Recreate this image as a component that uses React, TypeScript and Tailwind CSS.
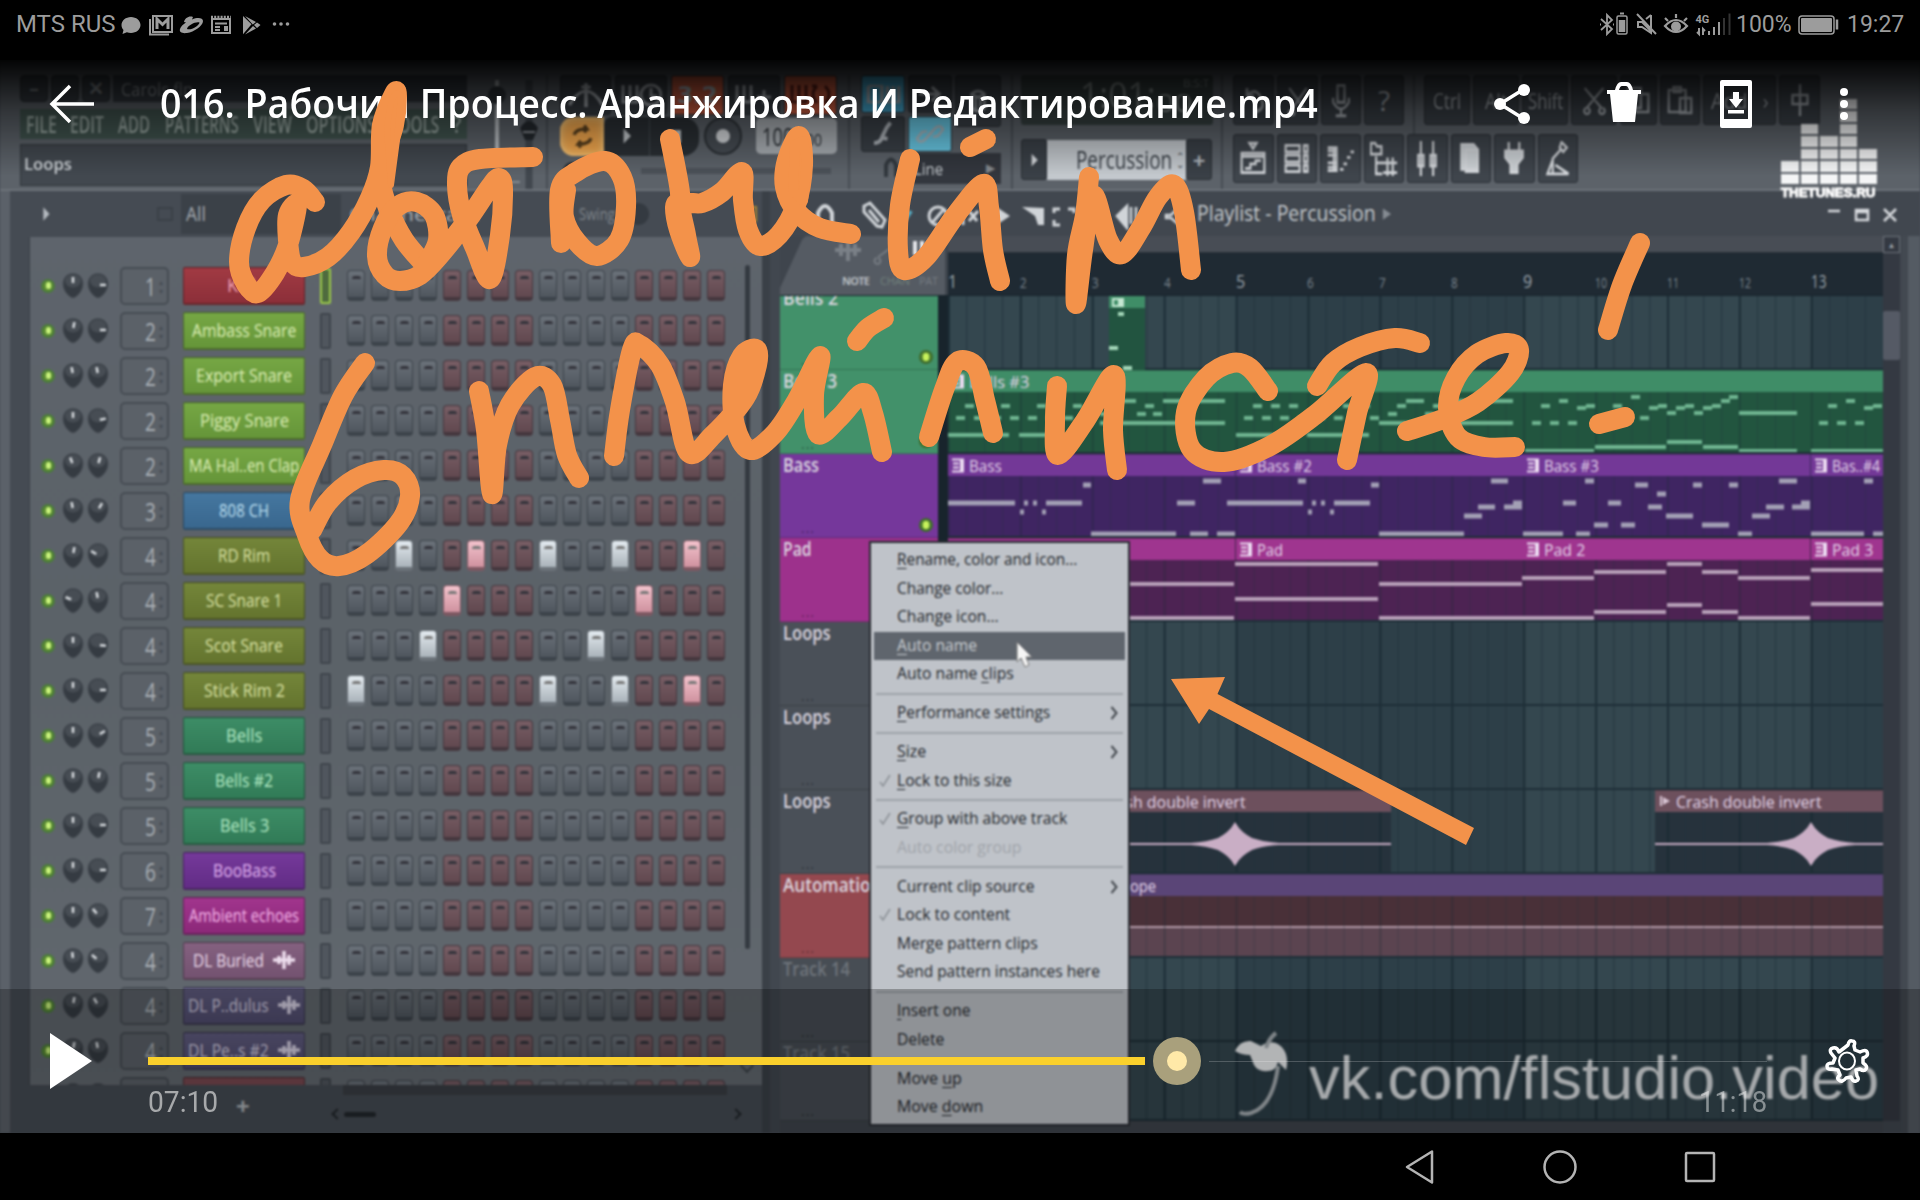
import React, { useLayoutEffect, useRef } from "react";

/* Text squeezed or stretched to a given width. */
function Fit({ w, className = "", children }: { w: number; className?: string; children: React.ReactNode }) {
  const ref = useRef<HTMLSpanElement>(null);
  useLayoutEffect(() => {
    const el = ref.current;
    if (el && el.offsetWidth) el.style.transform = `scaleX(${w / el.offsetWidth})`;
  }, [w]);
  return (
    <span className={"block shrink-0 leading-none " + className} style={{ width: w }}>
      <span ref={ref} className="inline-block origin-left whitespace-pre">
        {children}
      </span>
    </span>
  );
}

/* ---------- status bar ---------- */
function StatusBar() {
  return (
    <header className="flex h-[60px] items-start justify-between bg-black pl-4 pr-4 pt-[12px] font-['Roboto'] text-[23px] text-[#9c9c9c]">
      <div className="flex h-[25px] items-center">
        <Fit w={99}>MTS RUS</Fit>
        <svg className="ml-[6px]" width="176" height="26" viewBox="121 12 176 26" fill="#9c9c9c">
          <path d="M131 17c5.200 0 9.500 3.600 9.500 8s-4.300 8-9.500 8c-1.500 0-2.900-.3-4.100-.8L122.500 34l1-4c-1.200-1.300-2-3.100-2-5 0-4.400 4.300-8 9.500-8z" />
          <g fill="none" stroke="#9c9c9c" strokeWidth="2">
            <rect x="153" y="16" width="19" height="16" />
            <path d="M150 19v15.500h19" />
            <path d="M157 29v-10l5.500 5.500L168 19v10" strokeWidth="3" />
          </g>
          <path d="M184 22c1-4 5-6.500 9-5l-1 2.500c6-2.500 11-1.500 11 1.500 0 5-9 11-16 12-5 .7-8-1-7-4 .8-2.500 3-4.500 6-6.500zm3 7c4 1.500 12-3 12.500-6.500-3-1.500-12 2.500-12.500 6.500z" fillRule="evenodd" />
          <g fill="none" stroke="#9c9c9c" strokeWidth="2">
            <rect x="212" y="19" width="18" height="14" />
            <path d="M211 17h20" strokeWidth="2.500" strokeDasharray="2 1.200" />
            <path d="M215 23.500h12M215 27h5M215 30h5" />
            <path d="M224 28.500h4" strokeWidth="5" />
          </g>
          <path d="M243 16l8.500 8.200-8.500 10zM245 16l11 6-3.200 2.500zM245 34.500l8-8.500 3 2.500zM257 22.500l3.500 2.500-3.500 3-3-2.900z" />
          <circle cx="274.500" cy="24" r="1.800" />
          <circle cx="281" cy="24" r="1.800" />
          <circle cx="287.500" cy="24" r="1.800" />
        </svg>
      </div>
      <div className="flex h-[25px] items-center">
        <svg width="134" height="28" viewBox="1599 11 134 28" fill="none" stroke="#9c9c9c" strokeWidth="2">
          <path d="M1601 19l11 10-5 5V15l5 5-11 10M1600 24.500h1M1613 24.500h1" strokeWidth="1.800" />
          <rect x="1617" y="16" width="10" height="18" rx="1.500" strokeWidth="1.500" />
          <path d="M1620 13.500h4" />
          <path d="M1622 20v12" strokeWidth="6.500" />
          <path d="M1637 14l19 20M1651 15v13M1651 15l-5 4M1638 22h4l9 9v2l-9-6h-4z" />
          <path d="M1665 26q11-12 22 0q-11 12-22 0zM1668 21l-3-3M1676 18v-4M1684 21l3-3" strokeWidth="2.200" />
          <circle cx="1676" cy="26.500" r="4" fill="#9c9c9c" />
          <text x="1695.500" y="22.500" fontFamily="Roboto" fontWeight="700" fontSize="11" fill="#9c9c9c" stroke="none">4G</text>
          <path d="M1699 28v6l-2-2M1703 35v-6l2 2M1709 31v4M1714 27v8M1719 22v13" />
          <path d="M1724 18v17M1729.500 13.500V35" stroke="#333" />
        </svg>
        <Fit w={56} className="ml-[3px]">100%</Fit>
        <svg className="ml-[6px]" width="42" height="20" viewBox="0 0 42 20">
          <rect x="1" y="1" width="35" height="18" rx="3" fill="none" stroke="#9c9c9c" strokeWidth="1.500" />
          <rect x="3" y="3" width="31" height="14" rx="1" fill="#9c9c9c" />
          <path d="M39 4.500v10" stroke="#9c9c9c" strokeWidth="2.500" />
        </svg>
        <Fit w={57} className="ml-[7px]">19:27</Fit>
      </div>
    </header>
  );
}

/* ---------- toolbar ---------- */
function Btn({ w, h, className = "", children }: { w: number; h: number; className?: string; children?: React.ReactNode }) {
  return (
    <div
      className={"flex shrink-0 items-center justify-center rounded-[3px] border border-[#2a2f35] text-[#aeb4ba] " + (className || "bg-[#3a4047]")}
      style={{ width: w, height: h }}
    >
      {children}
    </div>
  );
}

function Ico({ d, w = 32, h = 32, sw = 3, fill = "none", c = "currentColor" }: { d: string; w?: number; h?: number; sw?: number; fill?: string; c?: string }) {
  return (
    <svg width={w} height={h} viewBox="0 0 32 32" fill={fill} stroke={c} strokeWidth={sw} preserveAspectRatio="none">
      <path d={d} />
    </svg>
  );
}

const SHORTCUTS: { w: number; label?: string; lw?: number; d?: string }[] = [
  { w: 46, label: "Ctrl", lw: 28 },
  { w: 46, label: "Alt", lw: 22 },
  { w: 46, label: "Shift", lw: 35 },
  { w: 46, d: "M6 4l18 20M26 4L8 24M8 24a3 3 0 1 0 1 0M24 24a3 3 0 1 0 1 0" },
  { w: 37, d: "M4 4h14v20H4zM12 10h14v18H12z" },
  { w: 40, d: "M4 6h18v22H4zM9 3h8v5H9zM16 14h12v15H16z" },
  { w: 73, label: "Add   ›", lw: 58 },
  { w: 41, d: "M16 0v32M8 11h16v9H8z" },
];

const WINDOW_ICONS: { d: string; fill?: string }[] = [
  { d: "M3 11h26v18H3zM3 14h26M7 25h6v-4h6v-3h6M16 7l4-5h-8z" },
  { d: "M3 4h16v6H3zM3 13h16v6H3zM3 22h16v6H3zM24 4h4v6h-4zM24 13h4v6h-4zM24 22h4v6h-4z" },
  { d: "M2 6h10v21H2M2 9h10M2 13h10M2 20h10M2 24h10M9 6v21M16 26h4M20 21h4M24 15h4M28 10h4" },
  { d: "M1 2h5l2 3h5v7H1zM7 14v16h7M7 20h12M15 20h16M15 29h16M20 15v10M26 15v10M20 25v7M26 25v7" },
  { d: "M9 0v32M23 0v32M6 13h6v10H6zM20 13h6v10h-6z" },
  { d: "M5 3h14l5 5v18H5zM10 8h14v20H10z", fill: "#cdd2d6" },
  { d: "M10 1v7M22 1v7M6 9h20v6l-6 6v8h-8v-8l-6-6z", fill: "#cdd2d6" },
  { d: "M20 1l6 5-4 4-4-4zM19 8l-9 8v13M10 17L4 30h24l-15-8", fill: "none" },
];

function Toolbar() {
  return (
    <div className="flex h-[131px] shrink-0 border-b-2 border-[#6c7279] bg-[#5c6269] pl-[20px] pt-[15px] font-['Open_Sans']">
      <div className="flex w-[447px] flex-col">
        <div className="flex h-[31px] gap-[3px]">
          {["–", "▫", "✕"].map((g) => (
            <div key={g} className="flex h-[27px] w-[28px] items-center justify-center rounded-sm border border-[#262b30] bg-[#343a40] text-[19px] font-bold text-[#858b90]">
              {g}
            </div>
          ))}
          <div className="flex h-[27px] flex-1 items-center bg-[#333940] pl-[8px] text-[18px] font-medium text-[#8e9499]">
            <Fit w={72}>Carols.flp</Fit>
          </div>
        </div>
        <div className="mt-[3px] flex h-[30px] items-center bg-[#41544f] pl-[6px] text-[23px] font-semibold text-[#9caaa5]">
          <Fit w={31}>FILE</Fit>
          <Fit w={34} className="ml-[13px]">EDIT</Fit>
          <Fit w={32} className="ml-[14px]">ADD</Fit>
          <Fit w={74} className="ml-[15px]">PATTERNS</Fit>
          <Fit w={39} className="ml-[14px]">VIEW</Fit>
          <Fit w={70} className="ml-[14px]">OPTIONS</Fit>
          <Fit w={49} className="ml-[14px]">TOOLS</Fit>
          <Fit w={8} className="ml-[14px]">?</Fit>
        </div>
        <div className="mt-[5px] flex h-[42px] items-center border border-[#30363c] bg-[#42484f] pb-[4px] pl-[3px] text-[17px] font-semibold text-[#d0d5d9]">
          <Fit w={48}>Loops</Fit>
        </div>
      </div>
      <svg className="shrink-0" width="90" height="114" viewBox="467 75 90 114">
        <path d="M497 80v80" stroke="#b9bec2" strokeWidth="4" />
        <path d="M529 80v110" stroke="#41474e" strokeWidth="7" />
        <path d="M520 128q9-14 18 0l-5 12h-8z" fill="#24292e" />
        <path d="M523 132h12M485 182h35" stroke="#858b90" strokeWidth="2" />
        <path d="M547 66v124" stroke="#484e55" strokeWidth="2" />
        <circle cx="497" cy="95" r="9" fill="#30363c" />
      </svg>
      <div className="flex w-[291px] flex-col pl-[3px]">
        <div className="flex h-[41px] gap-[4px] font-['DejaVu_Sans'] text-[23px]">
          <Btn w={51} h={40}>
            <Ico d="M2 26q14-28 28 0M16 4v24M12 8h8" w={38} />
          </Btn>
          <Btn w={52} h={40}>
            <svg width="42" height="26" viewBox="0 0 42 26" fill="none" stroke="#aeb4ba" strokeWidth="3"><path d="M3 3v17h14V3M10 3v17M31 6v8h6" /><circle cx="31" cy="13" r="10" /></svg>
          </Btn>
          <Btn w={53} h={40} className="bg-[#cf5d40] font-bold text-[#5c2018]">3.2</Btn>
          <Btn w={52} h={40}>
            <svg width="40" height="26" viewBox="0 0 40 26" fill="none" stroke="#aeb4ba" strokeWidth="3"><path d="M3 3v17h14V3M10 3v17M23 15h14M30 8v14" /></svg>
          </Btn>
          <Btn w={53} h={40} className="bg-[#cf5d40]">
            <svg width="44" height="26" viewBox="0 0 44 26" fill="none" stroke="#5c2018" strokeWidth="3"><path d="M3 3v17h14V3M10 3v17M28 4q-8 8 0 17M36 4q8 8 0 17M28 4h-5M36 21h5" /></svg>
          </Btn>
        </div>
        <div className="flex h-[40px] items-center">
          <div className="flex h-[39px] w-[44px] items-center justify-center rounded-l-[14px] bg-[#f5a94e] text-[#59401f] shadow-[inset_0_0_8px_#ffdf9a]">
            <Ico d="M6 14q2-7 15-7l-3-4M21 7l-3 4M26 18q-2 7-15 7l3-4M11 25l3 4" w={27} h={27} sw={4} />
          </div>
          <div className="flex h-[39px] w-[46px] items-center justify-center rounded-l-[8px] border-r border-[#454b51] bg-[#2b3035]">
            <Ico d="M10 6l13 10-13 10z" w={18} h={24} fill="#c5cace" c="none" />
          </div>
          <div className="flex h-[39px] w-[49px] items-center justify-center rounded-r-[16px] bg-[#2b3035]">
            <div className="h-[13px] w-[13px] bg-[#c5cace]" />
          </div>
          <div className="ml-[5px] flex h-[38px] w-[38px] items-center justify-center rounded-full border-2 border-[#2b3035] bg-[#474d54]">
            <div className="h-[14px] w-[14px] rounded-full bg-[#d5d8dc]" />
          </div>
          <div className="ml-[14px] flex h-[36px] w-[81px] items-center rounded-[5px] bg-[#a9aeb3] pl-[6px] text-[25px] text-[#2b3035]">
            <Fit w={36}>100.</Fit>
            <Fit w={24} className="pt-[6px] text-[17px]">000</Fit>
          </div>
        </div>
        <div className="flex h-[30px] items-center pl-[3px]">
          <div className="h-[18px] w-[18px] rounded-full bg-[#2b3035]" />
          <div className="ml-[60px] h-[6px] w-[190px] bg-[#4b5158]" />
        </div>
      </div>
      <div className="flex w-[163px] border-l-2 border-[#484e55] pl-[11px]">
        <div className="flex w-[140px] flex-col">
          <div className="flex gap-[3px]">
            <div className="flex flex-col gap-[3px]">
              <Btn w={44} h={38} className="bg-[#45aad2] text-[#1d4e66]"><Ico d="M3 6h12v20M3 6v20h12M20 6v20h10V6M25 6v18" w={36} h={26} /></Btn>
              <Btn w={44} h={36}><Ico d="M4 27q9 0 11-8l6-11 5-6M13 20l9 2" w={24} h={26} sw={5} /></Btn>
            </div>
            <div className="flex flex-col gap-[3px]">
              <Btn w={44} h={38}><Ico d="M4 16h20M18 9l8 7-8 7" w={30} /></Btn>
              <Btn w={44} h={36} className="bg-[#68c8e4] text-[#245f78]"><Ico d="M14 18l8-9q5-3 7 2l-5 7-5 1M18 14l-8 9q-5 3-7-2l5-7 5-1" w={32} h={30} sw={2.5} /></Btn>
            </div>
            <Btn w={46} h={52}><Ico d="M8 9q8-6 16 0v14q-8 6-16 0zM8 9q8 6 16 0M13 13v12M19 13v12" w={26} /></Btn>
          </div>
          <div className="flex h-[32px] items-center">
            <svg className="ml-[22px] mr-[8px] shrink-0" width="16" height="24" viewBox="0 0 16 24" fill="none" stroke="#33393f" strokeWidth="4"><path d="M3 21V9q5-11 10 0v12" /></svg>
            <div className="flex h-[31px] w-[94px] shrink-0 items-center justify-between bg-[#33373e] pl-[7px] pr-[6px] text-[17px] font-medium text-[#c5cace]">
              <Fit w={29}>Line</Fit><span className="text-[12px] text-[#84898e]">▶</span>
            </div>
          </div>
        </div>
      </div>
      <div className="flex w-[210px] flex-col border-l-2 border-[#484e55] pl-[8px]">
        <div className="flex h-[50px] w-[192px] items-start justify-end rounded-[3px] bg-[#364040] pr-[4px] text-[36px] text-[#87908f]">
          <Fit w={76} className="pt-[2px]">1:01:</Fit>
          <Fit w={37} className="pt-[15px] text-[25px]">00</Fit>
          <Fit w={26} className="-ml-[10px] pt-[2px] text-[11px]">B:S:T</Fit>
        </div>
        <div className="mt-[14px] flex h-[41px] items-center">
          <Btn w={26} h={41}><Ico d="M10 6l13 10-13 10z" w={15} h={20} fill="#d5d8dc" c="none" /></Btn>
          <div className="flex h-[40px] w-[139px] shrink-0 items-center bg-[#c3c8cd] pl-[29px] text-[25px] font-medium text-[#383e45]">
            <Fit w={96}>Percussion</Fit>
            <span className="ml-[4px] text-[10px] leading-[8px]">⌃<br />⌄</span>
          </div>
          <Btn w={26} h={41}><span className="text-[22px] font-bold">+</span></Btn>
        </div>
      </div>
      <div className="flex flex-col border-l-2 border-[#484e55] pl-[10px]">
        <div className="flex h-[59px] gap-[3px]">
          <Btn w={41} h={50}><Ico d="M8 12q10-10 16 2t-8 14M8 12V4M8 12h8" w={28} /></Btn>
          <Btn w={41} h={50}><Ico d="M6 4l18 22M26 4L8 26M8 26a3 3 0 1 0 1 0" w={28} sw={2.500} /></Btn>
          <Btn w={40} h={50}><Ico d="M12 3h8v15h-8zM7 14v4q9 12 18 0v-4M16 24v6M10 30h12" w={28} h={36} sw={2.500} /></Btn>
          <Btn w={40} h={50}><span className="text-[28px]">?</span></Btn>
          <div className="mx-[6px] w-[2px] bg-[#484e55]" />
          {SHORTCUTS.map((s, i) => (
            <Btn key={i} w={s.w} h={50}>
              {s.label ? <Fit w={s.lw ?? 30} className="text-[22px]">{s.label}</Fit> : <Ico d={s.d ?? ""} w={30} sw={2.500} />}
            </Btn>
          ))}
        </div>
        <div className="flex gap-[3px] text-[#d5d8dc]">
          {WINDOW_ICONS.map((it, i) => (
            <div key={i} className="flex h-[49px] w-[40.500px] items-center justify-center rounded-[3px] border border-[#2a2f35] bg-[#3f454c]">
              <Ico d={it.d} w={28} h={35} sw={2.500} fill={it.fill ?? "none"} />
            </div>
          ))}
        </div>
      </div>
    </div>
  );
}

/* ---------- channel rack ---------- */
type Channel = { n: string; name: string; w: number; top: string; bottom: string; text: string; k: [number, number]; on?: number[]; wave?: boolean };
const LIME = ["#76a744", "#659539", "#dff0b8"];
const OLIVE = ["#74863a", "#64742e", "#dbe3a6"];
const GREEN = ["#3d8d66", "#317b57", "#b5ecc6"];
const ch = (n: string, name: string, w: number, c: string[], k: [number, number], on?: number[], wave?: boolean): Channel => ({
  n, name, w, top: c[0], bottom: c[1], text: c[2], k, on, wave,
});
const CHANNELS: Channel[] = [
  ch("1", "Kick", 34, ["#a13a43", "#8c2f39", "#f0a3b4"], [0, 90]),
  ch("2", "Ambass Snare", 104, LIME, [10, 90]),
  ch("2", "Export Snare", 96, LIME, [-10, -10]),
  ch("2", "Piggy Snare", 89, LIME, [0, 80]),
  ch("2", "MA Hal..en Clap", 110, LIME, [-20, 15]),
  ch("3", "808 CH", 50, ["#4577a0", "#39678e", "#bfe0f2"], [-10, 30]),
  ch("4", "RD Rim", 52, OLIVE, [10, -60], [2, 5, 8, 11, 14]),
  ch("4", "SC Snare 1", 76, OLIVE, [-70, -10], [4, 12]),
  ch("4", "Scot Snare", 78, OLIVE, [0, 95], [3, 10]),
  ch("4", "Stick Rim 2", 81, OLIVE, [0, 90], [0, 8, 11, 14]),
  ch("5", "Bells", 36, GREEN, [0, 60]),
  ch("5", "Bells #2", 58, GREEN, [0, 10]),
  ch("5", "Bells 3", 49, GREEN, [0, 90]),
  ch("6", "BooBass", 63, ["#75399a", "#622c86", "#e2b4f2"], [0, 90]),
  ch("7", "Ambient echoes", 110, ["#a1358d", "#8c2879", "#f5b6ea"], [0, -40]),
  ch("4", "DL Buried", 71, ["#856180", "#735270", "#ecdcec"], [-5, -50], undefined, true),
  ch("4", "DL P..dulus", 81, ["#605c80", "#504c6e", "#d5cfe2"], [10, -30], undefined, true),
  ch("4", "DL Pe..s #2", 81, ["#605c80", "#504c6e", "#d5cfe2"], [10, -10], undefined, true),
  ch("4", "", 30, ["#7a4a52", "#6a3a42", "#eee"], [0, 0]),
];

function Knob({ a }: { a: number }) {
  return (
    <svg width="22" height="28" viewBox="0 0 22 28" className="shrink-0">
      <path d="M11 1.500c6 0 10 4.500 10 10.500 0 7-6 13-10 14C7 25 1 19 1 12 1 6 5 1.500 11 1.500z" fill="#353b42" stroke="#4a5057" />
      <ellipse cx="11" cy="9" rx="8" ry="6.500" fill="#474d54" />
      <path d="M11 5v6" stroke="#d8dce0" strokeWidth="2.500" transform={`rotate(${a} 11 13)`} />
    </svg>
  );
}

function Step({ red, on }: { red: boolean; on: boolean }) {
  const tone = on
    ? red ? "from-[#f3c3cd] to-[#cf929f] border-[#7d5862]" : "from-[#e4ebf0] to-[#aab3ba] border-[#6b7279]"
    : red ? "from-[#785e65] to-[#61484f] border-[#45373e]" : "from-[#6b727a] to-[#4f565e] border-[#3c434a]";
  return (
    <div className={"flex h-[31px] w-[18px] justify-center rounded-[4px] border-[1.500px] border-b-4 bg-gradient-to-b pt-[5px] " + tone}>
      <div className={"h-[3px] w-[9px] rounded-t-sm " + (on ? "bg-[#777]" : "bg-[#33333b]")} />
    </div>
  );
}

function Rack() {
  return (
    <section className="flex w-[762px] shrink-0 flex-col border-l-[10px] border-[#5b6169] bg-[#454b53] pl-[2px] font-['Open_Sans']">
      <div className="flex h-[46px] shrink-0 items-center pl-[27px] text-[#a5abb1]">
        <Ico d="M10 4l14 12-14 12z" w={14} h={18} fill="#b5bac0" c="none" />
        <div className="ml-[104px] h-[14px] w-[16px] border-2 border-[#3a4047]" />
        <div className="ml-[8px] flex h-[40px] w-[160px] items-center bg-[#3b4148] pl-[5px] text-[20px]">
          <Fit w={20}>All</Fit>
        </div>
        <Fit w={130} className="ml-[8px] text-[19px]">Channel rack</Fit>
        <Fit w={36} className="ml-[100px] text-[16px] text-[#7f858b]">Swing</Fit>
        <div className="ml-[12px] h-[22px] w-[22px] rounded-full bg-[#343a41]" />
        <div className="ml-[88px] h-[16px] w-[20px] border-2 border-[#a58436]" />
      </div>
      <div className="ml-[17px] flex h-[848px] shrink-0 overflow-hidden border-l border-[#3a4047] bg-gradient-to-b from-[#5e646c] via-[#5b6268] to-[#62686f]">
        <div className="flex w-[699px] flex-col pt-[26px]">
          {CHANNELS.map((c, i) => (
            <div key={i} className="flex h-[45px] shrink-0 items-center">
              <div className="ml-[11px] flex h-[14px] w-[14px] items-center justify-center rounded-full border-2 border-[#4b7c3b] bg-[#5e8d34]">
                <div className="h-[7px] w-[5px] rounded-full bg-[#c8f27c]" />
              </div>
              <div className="ml-[5px] flex w-[50px] gap-[3px] pl-[2px]">
                <Knob a={c.k[0]} />
                <Knob a={c.k[1]} />
              </div>
              <div className="ml-[10px] flex h-[38px] w-[49px] items-center justify-end rounded-[5px] border-2 border-[#464c53] bg-[#5b6168] pr-[4px] text-[26px] text-[#a9afb5]">
                <Fit w={11}>{c.n}</Fit>
                <span className="ml-[3px] text-[8px] leading-[9px] text-[#464c53]">▴<br />▾</span>
              </div>
              <div
                className="ml-[14px] flex h-[38px] w-[122px] items-center justify-center rounded-[2px] border border-b-2 border-black/35 pb-[1px] text-[18px] font-medium"
                style={{ background: `linear-gradient(${c.top},${c.bottom})`, color: c.text }}
              >
                <Fit w={c.w}>{c.name}</Fit>
                {c.wave && (
                  <svg className="ml-[9px]" width="22" height="20" viewBox="0 0 22 20" stroke="currentColor" strokeWidth="3.500">
                    <path d="M0 10h22M6 6v8M11 1v18M16 5v10" />
                  </svg>
                )}
              </div>
              <div className={"ml-[15px] h-[36px] w-[11px] rounded-[2px] border-2 " + (i === 0 ? "border-[#9bc94a] bg-[#4f6b3e]" : "border-[#3f454c] bg-[#50565e]")} />
              <div className="ml-[16px] flex gap-[6px]">
                {Array.from({ length: 16 }, (_, s) => (
                  <Step key={s} red={Math.floor(s / 4) % 2 === 1} on={!!c.on?.includes(s)} />
                ))}
              </div>
            </div>
          ))}
        </div>
        <div className="ml-[13px] mt-[28px] flex flex-col items-center">
          <div className="h-[684px] w-[5px] rounded bg-[#343a41]" />
          <div className="mt-[112px] h-[10px] w-[10px] rotate-45 border-b-2 border-r-2 border-[#3a4047]" />
        </div>
      </div>
      <div className="flex h-[45px] items-start">
        <span className="ml-[224px] mt-[9px] text-[24px] font-bold leading-none text-[#b0b5ba]">+</span>
        <div className="ml-[94px] w-[402px] shrink-0">
          <div className="ml-[-1px] h-[10px] w-[384px] bg-[#3a3e44]" />
          <div className="mt-[15px] flex items-center">
            <div className="-ml-[11px] h-[8px] w-[8px] rotate-45 border-b-2 border-l-2 border-[#22272c]" />
            <div className="ml-[3px] h-[5px] w-[32px] rounded bg-[#22272c]" />
            <div className="ml-[356px] h-[8px] w-[8px] rotate-45 border-r-2 border-t-2 border-[#22272c]" />
          </div>
        </div>
      </div>
    </section>
  );
}

/* ---------- playlist ---------- */
type Note = [number, number, number];
const BAR = 71.9;
const GRID_W = 935;
const LANE = 84;

/* Notes are [start, end, y] in lane coordinates. */
const shorts = (dx: number, list: [number, number][]): Note[] => list.map(([x, y]) => [x + dx, x + dx + 9, y]);
const BELLS_A: [number, number][] = [
  [8, 48], [26, 48], [44, 48], [62, 48], [80, 48], [98, 48], [116, 48], [17, 36], [35, 36], [53, 36], [89, 36], [107, 36], [125, 36],
  [134, 48], [152, 44], [161, 36], [170, 31], [179, 31], [189, 44], [197, 36], [205, 44],
];
const BELLS_B: [number, number][] = [[8, 53], [26, 53], [44, 53], [17, 36], [35, 31], [53, 38], [62, 36]];
const BELLS_NOTES: Note[] = [
  ...shorts(0, BELLS_A), ...shorts(288, BELLS_A), ...shorts(576, BELLS_B), ...shorts(863, BELLS_B),
  ...shorts(576, [[80, 53], [89, 36], [107, 27], [116, 48], [125, 38], [134, 36], [143, 43], [152, 38], [161, 36], [170, 43], [179, 38], [188, 36], [197, 31], [205, 27]]),
  [0, 61, 65], [71, 132, 65], [152, 277, 53], [215, 277, 31],
  [288, 349, 65], [359, 421, 65], [431, 565, 53], [503, 565, 31],
  [577, 646, 81], [647, 718, 77], [719, 754, 72], [755, 790, 77], [791, 849, 81], [791, 849, 43], [863, 935, 81],
];
const BASS_A: Note[] = [
  [0, 67, 49], [72, 76, 58], [76, 80, 49], [85, 89, 49], [94, 98, 58], [98, 134, 49], [135, 143, 31], [143, 228, 80],
];
const BASS_NOTES: Note[] = [
  ...BASS_A, ...BASS_A.map(([a, b, y]): Note => [a + 288, b + 288, y]),
  [229, 247, 49], [242, 260, 80], [255, 273, 27], [269, 287, 80], [279, 288, 49], [350, 358, 27],
  [516, 534, 62], [530, 547, 53], [543, 560, 27], [556, 574, 53], [565, 574, 49],
  [575, 615, 80], [615, 628, 49], [628, 642, 80], [637, 646, 27], [646, 660, 71], [660, 673, 49], [673, 687, 71], [687, 700, 31],
  [700, 714, 53], [709, 718, 40], [718, 745, 62], [745, 754, 31], [754, 781, 71], [781, 790, 31], [790, 804, 80], [804, 822, 62],
  [818, 836, 53], [831, 849, 27], [844, 862, 53], [853, 862, 49], [863, 916, 80], [916, 925, 27], [925, 935, 80],
];
const PAD_NOTES: Note[] = [
  [100, 286, 46], [100, 286, 80], [287, 430, 26], [287, 430, 61], [431, 574, 46], [431, 646, 80], [574, 646, 40],
  [646, 718, 34], [646, 718, 74], [719, 754, 26], [719, 754, 67], [754, 790, 34], [754, 790, 74], [790, 862, 40], [790, 862, 80],
  [863, 935, 32], [863, 935, 66],
];

type Clip = { x: number; w: number; label: string; lw: number; color: string; icon?: boolean };
type Track = {
  name: string; nw: number; color: string; led?: boolean; dim?: boolean; clips: Clip[]; body?: string; notes?: Note[]; noteColor?: string; nh?: number; draw?: "wave" | "auto";
};
const CRASH = "#6d505d";
const TRACKS: Track[] = [
  { name: "Bells 3", nw: 54, color: "#42916a", led: true, clips: [{ x: 0, w: 935, label: "Bells #3", lw: 60, color: "#3f8d67", icon: true }], body: "#22553f", notes: BELLS_NOTES, noteColor: "#6fb591", nh: 4 },
  {
    name: "Bass", nw: 36, color: "#75379b", led: true, body: "#3f2562", notes: BASS_NOTES, noteColor: "#a3a0b5", nh: 5,
    clips: [{ x: 0, w: 287, label: "Bass", lw: 33, color: "#733897", icon: true }, { x: 288, w: 287, label: "Bass #2", lw: 55, color: "#733897", icon: true }, { x: 575, w: 287, label: "Bass #3", lw: 55, color: "#733897", icon: true }, { x: 863, w: 72, label: "Bas..#4", lw: 48, color: "#733897", icon: true }],
  },
  {
    name: "Pad", nw: 29, color: "#9d318c", body: "#4d2353", notes: PAD_NOTES, noteColor: "#b79fb8", nh: 4,
    clips: [{ x: 0, w: 287, label: "Pad", lw: 25, color: "#9f358f", icon: true }, { x: 288, w: 287, label: "Pad", lw: 26, color: "#9f358f", icon: true }, { x: 575, w: 287, label: "Pad 2", lw: 41, color: "#9f358f", icon: true }, { x: 863, w: 72, label: "Pad 3", lw: 41, color: "#9f358f", icon: true }],
  },
  { name: "Loops", nw: 48, color: "#4a5058", clips: [] },
  { name: "Loops", nw: 48, color: "#4a5058", clips: [] },
  { name: "Loops", nw: 48, color: "#4a5058", draw: "wave", clips: [{ x: 131, w: 312, label: "Crash double invert", lw: 146, color: CRASH, icon: true }, { x: 707, w: 228, label: "Crash double invert", lw: 146, color: CRASH, icon: true }] },
  { name: "Automation", nw: 98, color: "#94484f", draw: "auto", clips: [{ x: 0, w: 935, label: "Channel volume - envelope", lw: 187, color: "#5a4577", icon: true }] },
  { name: "Track 14", nw: 67, color: "#474d54", dim: true, clips: [] },
  { name: "Track 15", nw: 67, color: "#474d54", dim: true, clips: [] },
];

function GridLines({ h }: { h: number }) {
  return (
    <svg className="absolute inset-0" width={GRID_W} height={h}>
      {Array.from({ length: 52 }, (_, i) => (
        <rect key={i} x={(i * BAR) / 4} y="0" width={i % 4 ? 1.5 : 2} height={h} fill={i % 4 ? "#24353f" : "#1a2a33"} opacity={i % 4 ? 0.6 : 0.85} />
      ))}
    </svg>
  );
}

function Lane({ t, h = LANE }: { t: Track; h?: number }) {
  return (
    <div className="relative w-[935px] shrink-0 overflow-hidden border-b-2 border-[#1e2e37] bg-[#30434d]" style={{ height: h }}>
      <div className="flex h-full">
        <div className="w-[288px] bg-[#34474f]" />
        <div className="w-[287px] bg-[#2d3f48]" />
        <div className="w-[288px] bg-[#34474f]" />
        <div className="w-[72px] bg-[#2d3f48]" />
      </div>
      {t.body && <div className="absolute inset-0" style={{ background: t.body }} />}
      {t.draw === "wave" && (
        <>
          <div className="absolute inset-y-0 left-[131px] w-[312px] bg-[#26323c]" />
          <div className="absolute inset-y-0 right-0 w-[228px] bg-[#26323c]" />
        </>
      )}
      {t.draw === "auto" && (
        <div className="absolute inset-0 flex flex-col">
          <div className="h-[52px] bg-[#493038]" />
          <div className="flex-1 border-t-2 border-[#b29aa8] bg-[#5b4450]" />
        </div>
      )}
      <div className={t.body || t.draw === "auto" ? "opacity-35" : ""}>
        <GridLines h={h} />
      </div>
      {t.notes && (
        <svg className="absolute inset-0" width={GRID_W} height={h}>
          {t.notes.map(([a, b, y], i) => (
            <rect key={i} x={a} y={y - (t.nh ?? 4) / 2} width={b - a} height={t.nh ?? 4} fill={t.noteColor} />
          ))}
        </svg>
      )}
      {t.draw === "wave" && (
        <svg className="absolute inset-0" width={GRID_W} height={h} fill="#c9aec5">
          <path d="M131 53h112q16-1 27-5l5-3 4-3 4-4 4-6 4 6 4 4 4 3 5 3q12 4 27 5h112v2H331q-16 1-27 5l-5 3-4 3-4 4-4 6-4-6-4-4-4-3-5-3q-12-4-27-5H131z" />
          <path d="M707 53h112q16-1 27-5l5-3 4-3 4-4 4-6 4 6 4 4 4 3 5 3q12 4 27 5h28v2h-28q-16 1-27 5l-5 3-4 3-4 4-4 6-4-6-4-4-4-3-5-3q-12-4-27-5H707z" />
        </svg>
      )}
      {t.clips.map((c, i) => (
        <div key={i} className="absolute top-0 flex h-[22px] items-center gap-[5px] border-t border-black/20 pb-[1px] pl-[4px] text-[17px] font-medium text-[#e3d5ea]" style={{ left: c.x, width: c.w, background: c.color }}>
          {c.color === CRASH ? (
            <svg width="12" height="12" viewBox="0 0 12 12" fill="#d8c4d4"><path d="M1 1h2v10H1zM4 2l7 4-7 4z" /></svg>
          ) : (
            <svg width="12" height="15" viewBox="0 0 12 15" fill="none" stroke="#ecdcf2" strokeWidth="2"><path d="M0 1.500h11v12H0M1 5.500h6M1 9.500h6" /><path d="M9.500 1v13" strokeWidth="3" /></svg>
          )}
          <Fit w={c.lw}>{c.label}</Fit>
        </div>
      ))}
    </div>
  );
}

function TrackHead({ t, h = LANE, cut = false }: { t: Track; h?: number; cut?: boolean }) {
  return (
    <div className="flex w-[158px] shrink-0 flex-col justify-between overflow-hidden border-b border-black/20 pl-[3px]" style={{ height: h, background: t.color }}>
      <Fit w={t.nw} className={"text-[19px] font-semibold " + (cut ? "-mt-[7px] " : "mt-[2px] ") + (t.dim ? "text-[#6e747b]" : "text-[#dcd7e0]")}>{t.name}</Fit>
      <div className="flex items-end justify-between pb-[5px] pr-[5px]">
        <span className="ml-[18px] text-[14px] leading-[8px] tracking-[1px] text-black/40">...</span>
        {t.led && (
          <span className="flex h-[14px] w-[14px] items-center justify-center rounded-full border-2 border-[#3d6a2c] bg-[#5b8d34]">
            <span className="h-[8px] w-[6px] rounded-full bg-[#c8f25c]" />
          </span>
        )}
      </div>
    </div>
  );
}

const BELLS2: Track = { name: "Bells 2", nw: 55, color: "#42916a", led: true, clips: [] };

function Playlist() {
  return (
    <section className="flex flex-1 flex-col border-l-[8px] border-[#3a4047] bg-[#41474f] font-['Open_Sans']">
      <div className="flex h-[45px] shrink-0 items-center text-[#c5cace]">
        <svg className="ml-[40px] shrink-0" width="372" height="32" viewBox="810 197 372 32" fill="none" stroke="#d0d4d8" strokeWidth="4">
          <path d="M818 224v-12q7-14 14 0v12" />
          <path d="M864 205l6-3 15 17-3 7-5-1-13-14zM869 209l10 12" strokeWidth="3" />
          <path d="M903 222l8-12" stroke="#56a9c0" />
          <circle cx="938" cy="215" r="9" strokeWidth="3" />
          <path d="M932 222l12-14" strokeWidth="3" />
          <path d="M963 211v13M969 210l8 10M978 210l-9 10" strokeWidth="3" />
          <path d="M998 212v-5l12 8-12 8v-5h-6v-6z" fill="#d0d4d8" stroke="none" />
          <path d="M1022 206l22 1v17h-6l-3-9z" fill="#d0d4d8" stroke="none" />
          <path d="M1054 212v-4h6M1068 208h6v4M1054 219v5h6" strokeWidth="3" />
          <path d="M1117 215l10-10v22zM1131 206v17M1136 206v17" fill="#d0d4d8" strokeWidth="2.500" />
          <path d="M1166 214h5l7-7v16l-7-6h-5z" strokeWidth="2.500" />
        </svg>
        <Fit w={179} className="ml-[15px] text-[21px] font-medium">Playlist - Percussion</Fit>
        <Ico d="M10 6l12 10-12 10z" w={22} h={18} fill="#858b92" c="none" />
        <svg className="ml-auto mr-[22px]" width="72" height="22" viewBox="1825 203 72 22" fill="none" stroke="#d5d8dc" strokeWidth="2.500">
          <path d="M1827 211h12M1855 210h12v10h-12zM1855 212h12M1883 209l12 12M1895 209l-12 12" />
        </svg>
      </div>
      <div className="flex">
        <div className="w-[10px]" />
        <div className="flex w-[1103px] flex-col bg-[#18242c]">
          <div className="flex h-[59px] bg-[#3f454d]">
            <svg width="168" height="59" viewBox="780 236 168 59">
              <path d="M780 288l22-48q4-5 8-5h135v60H780z" fill="#555b63" />
              <path d="M835 250h26M841 244v12M848 239v22M855 244v12" stroke="#7a8087" strokeWidth="4" />
              <path d="M878 257l14-10M877 258a3 3 0 1 0 1 0" stroke="#757b82" strokeWidth="2" fill="none" />
              <path d="M915 241v14M922 241v14" stroke="#e5e7ea" strokeWidth="4" />
              <text x="842" y="285" fontFamily="Open Sans" fontWeight="700" fontSize="11" textLength="28" fill="#b6bbc0">NOTE</text>
              <text x="880" y="285" fontFamily="Open Sans" fontSize="11" textLength="30" fill="#70807b">CHAN</text>
              <text x="919" y="285" fontFamily="Open Sans" fontSize="11" textLength="19" fill="#757b82">PAT</text>
            </svg>
            <div className="flex flex-1 flex-col">
              <div className="h-[17px] border-b border-[#2a3038] bg-[#484d55]" />
              <div className="flex flex-1 items-end overflow-hidden bg-[#1f2a33] pb-[5px] text-[#9aa3ab]">
                {Array.from({ length: 13 }, (_, i) => (
                  <div key={i} className="shrink-0" style={{ width: BAR }}>
                    <Fit w={i > 8 ? (i === 12 ? 16 : 12) : i % 4 ? 7 : 9} className={i % 4 ? "text-[15px] text-[#7c868f]" : "text-[18px]"}>{i + 1}</Fit>
                  </div>
                ))}
              </div>
            </div>
          </div>
          <div className="flex gap-[10px] pt-[1px]">
            <TrackHead t={BELLS2} h={74} cut />
            <div className="relative">
              <Lane t={BELLS2} h={74} />
              <div className="absolute left-[161px] top-0 h-[74px] w-[36px] bg-[#225440]">
                <div className="flex h-[12px] items-center bg-[#3f8d67] pl-[3px]"><div className="h-[9px] w-[12px] border-2 border-r-[6px] border-[#c5e8d3]" /></div>
                <div className="ml-[9px] mt-[4px] h-[4px] w-[6px] bg-[#a5d8ba]" />
                <div className="mt-[30px] h-[4px] w-[9px] bg-[#a5d8ba]" />
                <div className="ml-[14px] mt-[16px] h-[4px] w-[9px] bg-[#a5d8ba]" />
              </div>
            </div>
          </div>
          {TRACKS.map((t, i) => (
            <div key={i} className="flex gap-[10px]">
              <TrackHead t={t} h={i === 8 ? 79 : LANE} />
              <Lane t={t} h={i === 8 ? 79 : LANE} />
            </div>
          ))}
          <div className="h-[13px] bg-[#3f454c]" />
        </div>
        <div className="flex h-[885px] w-[17px] flex-col bg-[#343942]">
          <div className="flex h-[17px] items-center justify-center border border-[#6d737b] text-[8px] text-[#9aa0a6]">▲</div>
          <div className="mt-[58px] h-[49px] rounded-[2px] bg-[#555a65]" />
        </div>
        <div className="ml-[2px] w-[6px] bg-[#434951]" />
        <div className="w-[12px] bg-[#545b63]" />
      </div>
    </section>
  );
}

/* ---------- context menu ---------- */
type Item = { label?: string; w?: number; check?: boolean; sub?: boolean; off?: boolean; hot?: boolean; u?: number };
const MENU: Item[] = [
  { label: "Rename, color and icon...", w: 180, u: 0 },
  { label: "Change color...", w: 106 },
  { label: "Change icon...", w: 102 },
  { label: "Auto name", w: 80, hot: true, u: 0 },
  { label: "Auto name clips", w: 117, u: 10 },
  {},
  { label: "Performance settings", w: 153, sub: true, u: 0 },
  {},
  { label: "Size", w: 29, sub: true, u: 0 },
  { label: "Lock to this size", w: 115, check: true, u: 0 },
  {},
  { label: "Group with above track", w: 170, check: true, u: 0 },
  { label: "Auto color group", w: 124, off: true },
  {},
  { label: "Current clip source", w: 137, sub: true },
  { label: "Lock to content", w: 113, check: true },
  { label: "Merge pattern clips", w: 141 },
  { label: "Send pattern instances here", w: 203 },
  {},
  { label: "Insert one", w: 73, u: 0 },
  { label: "Delete", w: 47 },
  {},
  { label: "Move up", w: 65, u: 5 },
  { label: "Move down", w: 86, u: 5 },
];

function ContextMenu() {
  return (
    <div className="absolute left-[869px] top-[481px] flex h-[585px] w-[261px] flex-col border-2 border-[#2a2d33] bg-[#bfc3c9] pt-[3px] font-['Open_Sans'] text-[17px] font-medium text-[#23272c]">
      {MENU.map((m, i) =>
        m.label ? (
          <div key={i} className={"mx-[3px] flex h-[28.500px] shrink-0 items-center pr-[6px] " + (m.hot ? "bg-[#5f656d] text-[#c9cdd2]" : m.off ? "text-[#9fa4aa]" : "")}>
            <span className="flex w-[23px] shrink-0 justify-center">
              {m.check && <svg width="13" height="14" viewBox="0 0 13 14" fill="none" stroke="#8b9096" strokeWidth="1.500"><path d="M1 8l3 4 7-11" /></svg>}
            </span>
            <Fit w={m.w ?? 100} className="h-[20px]">
              {m.u === undefined ? m.label : (
                <>{m.label.slice(0, m.u)}<u className="decoration-1 underline-offset-[3px]">{m.label[m.u]}</u>{m.label.slice(m.u + 1)}</>
              )}
            </Fit>
            {m.sub && <svg className="ml-auto" width="9" height="14" viewBox="0 0 9 14" fill="none" stroke="#44494f" strokeWidth="2"><path d="M1.500 1l5 6-5 6" /></svg>}
          </div>
        ) : (
          <div key={i} className="flex h-[10.400px] shrink-0 items-center px-[5px]"><div className="h-[2px] flex-1 bg-[#9da2a8]" /></div>
        ),
      )}
    </div>
  );
}

/* ---------- watermarks over the video ---------- */
function Watermarks() {
  const cols = [2, 5, 4, 7, 3];
  return (
    <>
      <div className="absolute left-[1781px] top-[38px] flex h-[101px] w-[96px] flex-col justify-end">
        <div className="flex items-end gap-[2px]">
          {cols.map((n, i) => (
            <div key={i} className="flex flex-1 flex-col gap-[2px]">
              {Array.from({ length: n }, (_, j) => <div key={j} className="h-[10.500px] bg-[#f4f5f6]" />)}
            </div>
          ))}
        </div>
        <Fit w={94} className="mt-[2px] h-[13px] font-['Liberation_Sans'] text-[13px] font-bold text-white [-webkit-text-stroke:1px_white]">THETUNES.RU</Fit>
      </div>
      <svg className="absolute left-[1228px] top-[965px]" width="70" height="95" viewBox="1228 1025 70 95" fill="#eef0f2">
        <path d="M1235 1051q5-11 16-10l10 5q14-9 23 4 5 8 2 20-4-4-8-8-2 9-10 9-10 1-14-6l-4-10q-9 0-15-4z" />
        <path d="M1266 1048q3-10 10-15M1278 1066q-5 40-27 47-8 2-11-1" fill="none" stroke="#a9b0b5" strokeWidth="4" />
      </svg>
      <Fit w={570} className="absolute left-[1309px] top-[988px] font-['Liberation_Sans'] text-[61px] text-[#dde1e4]">vk.com/flstudio.video</Fit>
      <svg className="absolute left-[1016px] top-[581px]" width="18" height="28" viewBox="0 0 18 28">
        <path d="M1 1v20l4-4 4 9 4-2-3-8h6z" fill="#f5f5f5" stroke="#777" strokeWidth="1" />
      </svg>
    </>
  );
}

/* ---------- player controls ---------- */
function Player() {
  return (
    <>
      <div className="absolute inset-x-0 top-0 h-[115px] bg-gradient-to-b from-black/95 via-black/45 via-45% to-transparent" />
      <div className="absolute inset-x-0 top-0 flex h-[88px] items-center pl-[48px] pr-[60px] text-white">
        <svg width="46" height="44" viewBox="0 0 46 44" fill="none" stroke="#fff" strokeWidth="3.500"><path d="M46 22H4M22 4L4 22l18 18" /></svg>
        <Fit w={1158} className="-mt-[3px] ml-[66px] font-['Open_Sans'] text-[39px] font-semibold">016. Рабочий Процесс. Аранжировка И Редактирование.mp4</Fit>
        <svg className="ml-auto shrink-0" width="372" height="50" viewBox="1488 79 372 50" fill="#fff">
          <path d="M1524 89l-24 15 24 15" fill="none" stroke="#fff" strokeWidth="3.500" />
          <circle cx="1524" cy="90" r="6" /><circle cx="1500" cy="104" r="6" /><circle cx="1524" cy="118" r="6" />
          <path d="M1607 90h34v4h-34zM1610 94h28l-3 28h-22zM1615 90q2-8 6-8h6q4 0 6 8h-4q-1-4-3-4h-4q-2 0-3 4z" />
          <path d="M1722 80h28q2 0 2 2v44q0 2-2 2h-28q-2 0-2-2V82q0-2 2-2zm2 6v33h24V86zM1733 92h6v7h4l-7 9-7-9h4zM1728 110h16v3.500h-16z" fillRule="evenodd" />
          <circle cx="1844" cy="92" r="4" /><circle cx="1844" cy="104" r="4" /><circle cx="1844" cy="116" r="4" />
        </svg>
      </div>
      <div className="absolute inset-x-0 bottom-0 flex h-[144px] bg-black/25 pl-[50px] pt-[44px]">
        <svg className="shrink-0" width="42" height="56" viewBox="0 0 42 56"><path d="M0 0l42 28L0 56z" fill="#fff" /></svg>
        <div className="ml-[56px] flex w-[1619px] flex-col">
          <div className="flex h-[56px] items-center">
            <div className="h-[8px] w-[997px] bg-[#fad02c]" />
            <div className="ml-[8px] flex h-[48px] w-[48px] items-center justify-center rounded-full bg-[#a9a07c]">
              <div className="h-[20px] w-[20px] rounded-full bg-[#ffe9a8]" />
            </div>
            <div className="ml-[8px] h-px flex-1 bg-white/20" />
          </div>
          <div className="-mt-[1px] flex justify-between font-['Roboto'] text-[29px] text-[#a7a9ab]">
            <Fit w={70}>07:10</Fit>
            <Fit w={68} className="text-white/45">11:18</Fit>
          </div>
        </div>
        <svg className="ml-[57px] mt-[4px] shrink-0" width="46" height="48" viewBox="0 0 46 48" fill="none" stroke="#fff" strokeWidth="3.500" strokeLinejoin="round">
          <path d="M24 7q1-5 4-4 4 0 2 5l1 4 5 2q6-3 7 0 2 4-4 6v5q5 3 3 6-2 3-6 0l-4 1 1 6q3 4-1 5-3 1-5-4l-5 1q-4 5-7 2-3-2 1-5l-2-5-6-1q-5 1-5-3 0-3 6-3l2-5-4-5q-2-4 2-5 4-1 6 4z" transform="translate(0 1)" />
          <ellipse cx="23" cy="24" rx="8" ry="8.500" strokeWidth="2" />
        </svg>
      </div>
    </>
  );
}

/* ---------- hand-drawn ink ---------- */
type P = [number, number];
function smooth(p: P[]): string {
  let d = `M${p[0][0]} ${p[0][1]}`;
  for (let i = 0; i < p.length - 1; i++) {
    const a = p[i - 1] ?? p[i], b = p[i], c = p[i + 1], e = p[i + 2] ?? c;
    d += `C${b[0] + (c[0] - a[0]) / 6} ${b[1] + (c[1] - a[1]) / 6} ${c[0] - (e[0] - b[0]) / 6} ${c[1] - (e[1] - b[1]) / 6} ${c[0]} ${c[1]}`;
  }
  return d;
}
const INK: P[][] = [
  [[315, 202], [303, 189], [286, 185], [262, 200], [246, 228], [239, 262], [246, 284], [258, 293], [275, 273], [288, 245], [297, 205], [288, 215], [288, 240], [292, 262], [304, 267], [328, 257], [351, 232], [370, 198], [380, 167], [382, 125], [394, 94], [397, 96], [394, 125], [384, 157], [381, 182], [388, 208], [404, 240], [424, 264]],
  [[428, 262], [438, 240], [434, 215], [417, 202], [398, 206], [383, 228], [377, 256], [385, 275], [400, 281], [420, 275], [440, 255], [469, 218], [490, 187], [499, 178], [503, 190], [500, 235], [490, 279], [475, 248], [462, 215], [457, 185], [461, 167], [480, 159], [533, 157]],
  [[561, 243], [560, 190], [576, 172], [605, 161], [622, 177], [626, 207], [619, 240], [597, 256], [577, 242], [564, 217], [566, 190]],
  [[670, 139], [680, 193], [675, 207], [679, 230], [690, 257], [686, 235], [682, 205], [702, 203], [722, 192], [742, 172], [743, 200], [748, 230], [760, 246], [779, 235], [796, 205], [803, 165], [799, 136], [787, 160], [785, 187], [797, 212], [820, 228], [851, 234]],
  [[910, 159], [900, 205], [898, 250], [904, 270], [926, 257], [955, 216], [983, 184], [989, 207], [993, 250], [1000, 281]],
  [[970, 147], [986, 139]],
  [[1089, 177], [1085, 215], [1077, 255], [1076, 304], [1083, 250], [1093, 195], [1108, 240], [1122, 254], [1141, 228], [1158, 197], [1174, 185], [1184, 212], [1191, 270]],
  [[365, 363], [343, 396], [322, 445], [300, 500], [307, 535], [320, 559], [339, 566], [367, 554], [399, 523], [410, 496], [403, 476], [384, 470], [355, 479], [328, 502], [312, 530]],
  [[479, 391], [486, 430], [492, 494], [497, 445], [510, 405], [535, 377], [552, 385], [560, 420], [567, 455], [579, 478]],
  [[614, 456], [620, 410], [632, 350], [640, 345], [660, 365], [675, 402], [689, 453], [713, 435], [745, 398], [757, 365], [756, 349], [742, 356], [733, 385], [735, 425], [750, 450], [775, 433], [797, 400], [820, 356], [814, 395], [818, 434], [840, 417], [863, 393], [873, 413], [882, 452]],
  [[857, 341], [868, 328], [884, 318]],
  [[929, 437], [944, 390], [957, 362], [976, 367], [985, 400], [993, 433]],
  [[1057, 386], [1055, 420], [1058, 455], [1085, 421], [1114, 375], [1113, 430], [1117, 470]],
  [[1268, 391], [1250, 368], [1232, 363], [1206, 378], [1186, 412], [1192, 450], [1224, 462], [1270, 446], [1315, 415], [1366, 373], [1357, 413], [1347, 460]],
  [[1317, 386], [1333, 363], [1360, 347], [1395, 338], [1420, 343]],
  [[1407, 431], [1443, 419], [1478, 402], [1510, 373], [1519, 350], [1506, 343], [1477, 354], [1456, 378], [1448, 408], [1458, 437], [1484, 447], [1515, 447]],
  [[1640, 243], [1622, 285], [1608, 330]],
  [[1599, 424], [1625, 417]],
];

function Ink() {
  return (
    <svg className="pointer-events-none absolute left-0 top-0" width="1920" height="1200" fill="none" stroke="#f3924a" strokeWidth="20" strokeLinecap="round" strokeLinejoin="round">
      {INK.map((p, i) => <path key={i} d={smooth(p)} />)}
      <path d="M387 130q3-32 9-37l5 2-4 45-6 45z" fill="#f3924a" strokeWidth="6" />
      <path d="M793 190l2-45 8-4 4 20-4 40z" fill="#f3924a" strokeWidth="10" />
      <path d="M1171 679l54-2-7.500 17L1474 828l-8 17L1209 709l-10 15z" fill="#f3924a" stroke="none" />
    </svg>
  );
}

export default function App() {
  return (
    <div className="relative flex h-[1200px] w-[1920px] flex-col overflow-hidden bg-black">
      <StatusBar />
      <main className="relative h-[1073px] shrink-0 overflow-hidden bg-[#4a5058]">
        <div className="flex h-full flex-col blur-[0.8px]">
          <Toolbar />
          <div className="flex h-[942px]">
            <Rack />
            <Playlist />
          </div>
          <ContextMenu />
          <Watermarks />
        </div>
        <Player />
      </main>
      <nav className="flex h-[67px] items-center bg-black pl-[1405px]">
        <svg width="312" height="40" viewBox="1405 1147 312 40" fill="none" stroke="#b4b4b4" strokeWidth="2.500" strokeLinejoin="round">
          <path d="M1407 1167l25-15.500v31z" />
          <circle cx="1560" cy="1167" r="15.500" />
          <rect x="1686" y="1153" width="28" height="28" rx="1" />
        </svg>
      </nav>
      <Ink />
    </div>
  );
}
